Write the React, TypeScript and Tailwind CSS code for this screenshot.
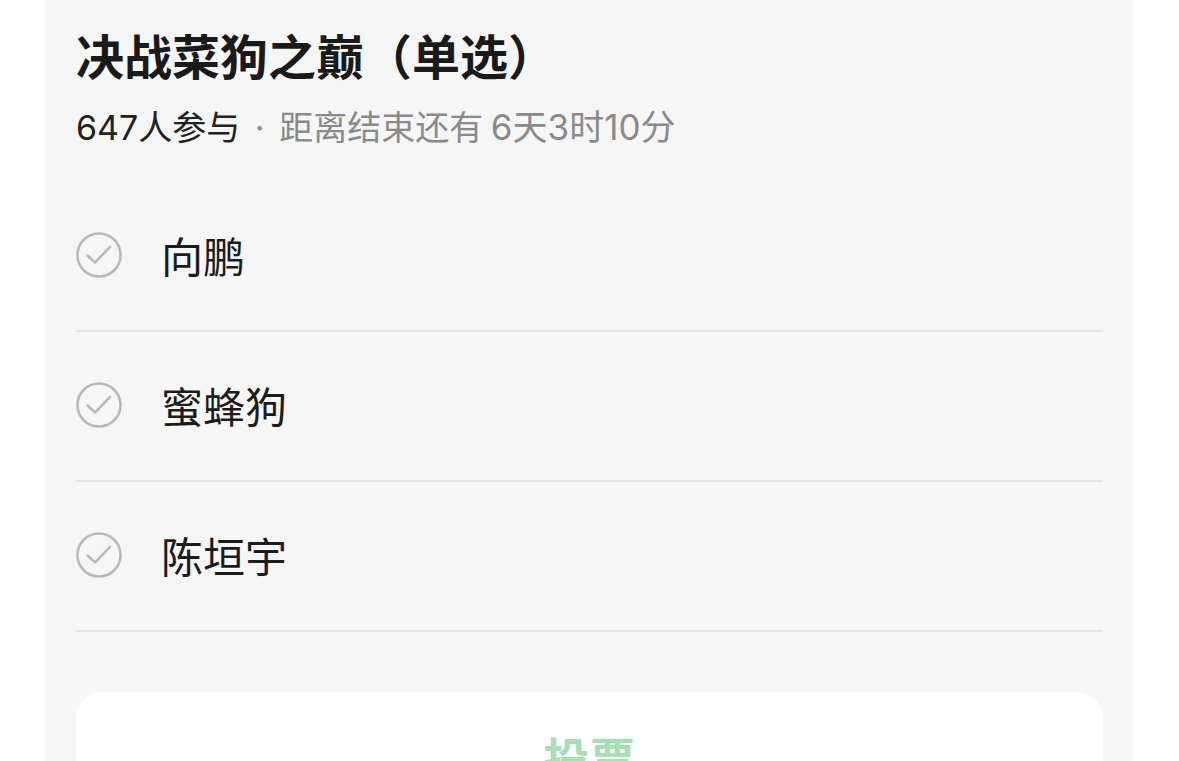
const options = ['向鹏', '蜜蜂狗', '陈垣宇']

function CheckCircle() {
  return (
    <svg width="46" height="46" viewBox="0 0 48 48" fill="none" className="shrink-0">
      <circle cx="24" cy="24" r="22.5" stroke="#b8b8b8" strokeWidth="2.6" />
      <path d="M12 24.5 L20 31.8 L35.5 15.5" stroke="#b8b8b8" strokeWidth="2.6" strokeLinecap="round" strokeLinejoin="round" />
    </svg>
  )
}

export default function App() {
  return (
    <div className="min-h-screen bg-white overflow-hidden font-['Noto_Sans_CJK_SC',sans-serif]">
      <div className="mx-[46px] -mt-5 rounded-[28px] bg-[#f6f6f6] px-[30px] pt-[44px] pb-10 shadow-[0_0_4px_rgba(0,0,0,0.04)]">
        <h1 className="text-[48px] leading-[60px] font-bold text-[#1a1a1a]">决战菜狗之巅（单选）</h1>
        <p className="mt-[18px] text-[34px] leading-[46px] text-[#8a8a8a]">
          <span className="font-['Inter','Noto_Sans_CJK_SC',sans-serif] text-[#222]">647</span>
          <span className="text-[#222]">人参与</span>
          <span className="px-[5px] font-['Inter',sans-serif]"> · </span>
          <span>距离结束还有 </span>
          <span className="text-[35px]">
            <span className="font-['Inter','Noto_Sans_CJK_SC',sans-serif]">6</span>天<span className="font-['Inter','Noto_Sans_CJK_SC',sans-serif]">3</span>时<span className="font-['Inter','Noto_Sans_CJK_SC',sans-serif]">10</span>分
          </span>
        </p>

        <ul className="mt-[31px]">
          {options.map((name) => (
            <li key={name} className="flex h-[150px] items-center gap-[39px] border-b-2 border-[#e3e3e3] pb-[2px]">
              <CheckCircle />
              <span className="text-[42px] leading-none text-[#1c1c1c]">{name}</span>
            </li>
          ))}
        </ul>

        <button className="mt-[60px] flex h-[128px] w-full items-center justify-center rounded-[26px] bg-white">
          <span className="text-[46px] font-bold text-[#a8deb3]">投票</span>
        </button>
      </div>
    </div>
  )
}
